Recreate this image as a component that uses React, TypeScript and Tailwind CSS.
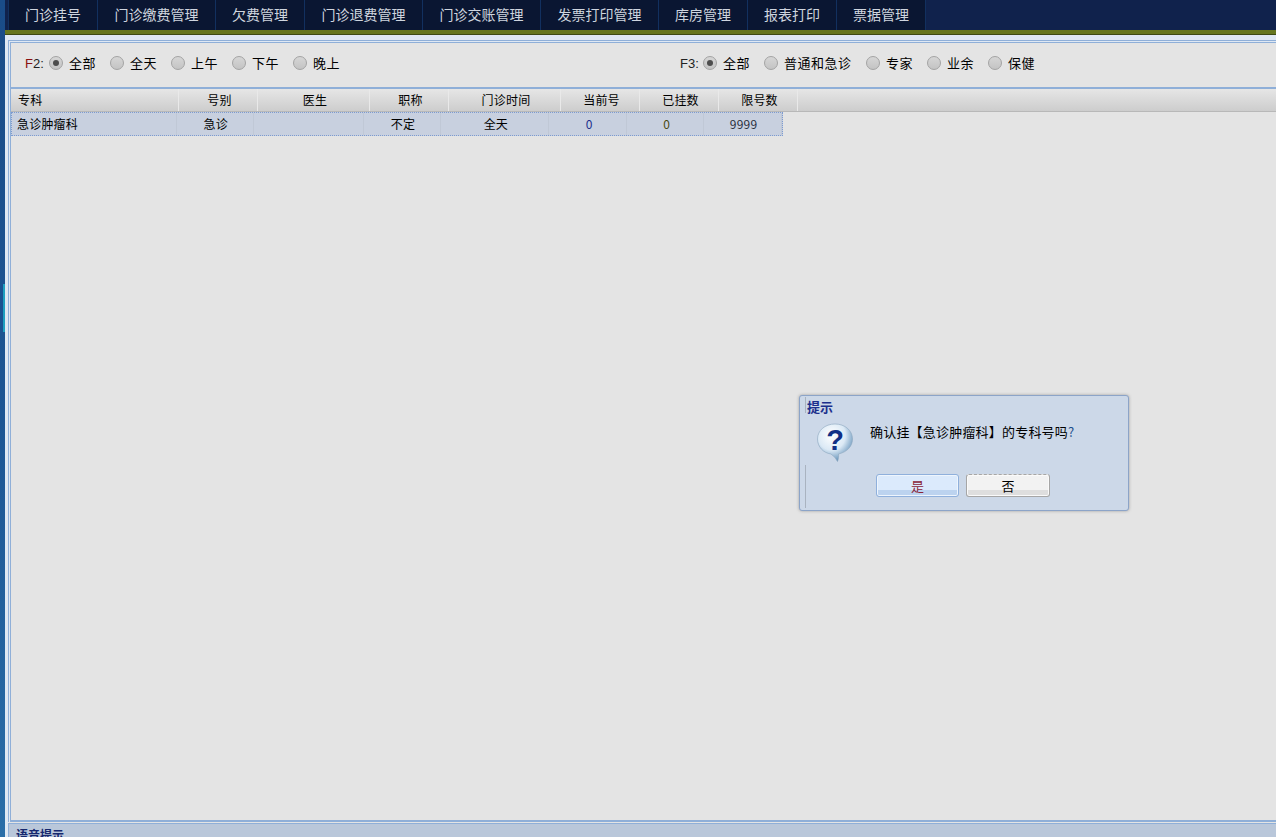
const tabs = [
  { label: '门诊挂号', w: 'w-[89px]' },
  { label: '门诊缴费管理', w: 'w-[118px]' },
  { label: '欠费管理', w: 'w-[89px]' },
  { label: '门诊退费管理', w: 'w-[118px]' },
  { label: '门诊交账管理', w: 'w-[118px]' },
  { label: '发票打印管理', w: 'w-[118px]' },
  { label: '库房管理', w: 'w-[89px]' },
  { label: '报表打印', w: 'w-[89px]' },
  { label: '票据管理', w: 'w-[89px]' },
];

const headers = [
  { label: '专科', w: 'w-[168px]', align: 'pl-[7px] text-left' },
  { label: '号别', w: 'w-[79px]', align: 'pl-[3px] text-center' },
  { label: '医生', w: 'w-[112px]', align: 'pl-[3px] text-center' },
  { label: '职称', w: 'w-[79px]', align: 'pl-[3px] text-center' },
  { label: '门诊时间', w: 'w-[112px]', align: 'pl-[3px] text-center' },
  { label: '当前号', w: 'w-[79px]', align: 'pl-[3px] text-center' },
  { label: '已挂数', w: 'w-[79px]', align: 'pl-[3px] text-center' },
  { label: '限号数', w: 'w-[79px]', align: 'pl-[3px] text-center' },
];

const cells = [
  { label: '急诊肿瘤科', w: 'w-[165px]', cls: 'pl-[5px] text-left text-black' },
  { label: '急诊', w: 'w-[77px]', cls: 'pl-[2px] text-center text-black' },
  { label: '', w: 'w-[110px]', cls: 'text-center' },
  { label: '不定', w: 'w-[78px]', cls: 'pl-[2px] text-center text-black' },
  { label: '全天', w: 'w-[108px]', cls: 'pl-[2px] text-center text-black' },
  { label: '0', w: 'w-[78px]', cls: 'pl-[3px] text-center text-[#1c2f8c]' },
  { label: '0', w: 'w-[77px]', cls: 'pl-[3px] text-center text-[#4a4a10]' },
  { label: '9999', w: 'w-[78px]', cls: 'pl-[2px] text-center text-[#2a3140]' },
];

function Radio({ label, checked = false, w }: { label: string; checked?: boolean; w: string }) {
  return (
    <div className={`flex items-center ${w}`}>
      <span className="flex h-[14px] w-[14px] shrink-0 items-center justify-center rounded-full border border-[#a3a3a3] bg-gradient-to-b from-[#d6d6d6] to-[#c4c4c4]">
        {checked && <span className="h-[6px] w-[6px] rounded-full bg-[#4d4d4d]" />}
      </span>
      <span className="ml-[6px] whitespace-nowrap pb-[2px] text-[13px] leading-none tracking-[0.5px] text-black">{label}</span>
    </div>
  );
}

function QuestionIcon() {
  return (
    <svg width="38" height="39" viewBox="0 0 38 39" className="shrink-0">
      <defs>
        <radialGradient id="bubble" cx="40%" cy="30%" r="72%">
          <stop offset="0%" stopColor="#ffffff" />
          <stop offset="55%" stopColor="#dbe9f5" />
          <stop offset="100%" stopColor="#5d8db6" />
        </radialGradient>
      </defs>
      <path
        d="M19 1C9 1 1.500 7.500 1.500 16c0 8 6 14 13.500 15l4 3.500 2.500 4c1-2.500 1.300-5 1-7.500C31 29 36.500 23.500 36.500 16 36.500 7.500 29 1 19 1z"
        fill="url(#bubble)"
        stroke="#8ba6bd"
        strokeWidth="0.6"
      />
      <text x="19" y="27" textAnchor="middle" fontFamily="'Liberation Sans', sans-serif" fontWeight="700" fontSize="29" fill="#0f2f86">
        ?
      </text>
    </svg>
  );
}

export default function App() {
  return (
    <div className="flex h-[837px] w-[1276px] overflow-hidden bg-[#e4e4e4] font-['Noto_Sans_CJK_SC','Liberation_Sans',sans-serif]">
      {/* left rail */}
      <div className="flex h-full w-[5px] shrink-0 flex-col bg-gradient-to-b from-[#1a4c88] via-[#1c5594] to-[#2a6ea8]">
        <div className="ml-[3px] mt-[284px] h-[48px] w-[2px] bg-[#1e9fc0]" />
      </div>

      <div className="flex min-w-0 flex-1 flex-col">
        {/* top tabs */}
        <div className="flex h-[30px] shrink-0 bg-[#10224c] pl-[3px]">
          {tabs.map((t) => (
            <div key={t.label} className={`flex h-full ${t.w} items-center justify-center border-l border-[#12305f] bg-[#0a1632] pb-[2px] text-[14px] leading-none text-[#cfd5df]`}>
              {t.label}
            </div>
          ))}
          <div className="h-full w-px bg-[#12305f]" />
        </div>
        <div className="h-[4px] shrink-0 bg-[#66761f]" />
        <div className="h-px shrink-0 bg-[#3e4a14]" />

        {/* main panel */}
        <div className="flex min-h-0 flex-1 flex-col bg-[#dfe8f3] pl-[3px] pt-[5px]">
          <div className="flex min-h-0 flex-1 flex-col border-l border-t border-[#8fafd8] pl-px pt-px">
            <div className="flex min-h-0 flex-1 flex-col border-l border-t border-[#8fafd8] bg-[#e4e4e4]">
              <div className="flex h-[44px] shrink-0 items-center pb-[4px] pl-[14px]">
                <span className="w-[24px] font-['Liberation_Sans',sans-serif] text-[13px] leading-none text-[#222]">
                  <span className="text-[#8a1010]">F</span>2:
                </span>
                <Radio label="全部" checked w="w-[61px]" />
                <Radio label="全天" w="w-[61px]" />
                <Radio label="上午" w="w-[61px]" />
                <Radio label="下午" w="w-[61px]" />
                <Radio label="晚上" w="w-[387px]" />
                <span className="w-[23px] font-['Liberation_Sans',sans-serif] text-[13px] leading-none text-[#222]">F3:</span>
                <Radio label="全部" checked w="w-[61px]" />
                <Radio label="普通和急诊" w="w-[102px]" />
                <Radio label="专家" w="w-[61px]" />
                <Radio label="业余" w="w-[61px]" />
                <Radio label="保健" w="w-[61px]" />
              </div>
              <div className="h-[2px] shrink-0 bg-[#8fafd8]" />
              <div className="flex h-[22px] shrink-0 bg-gradient-to-b from-[#e6e6e6] to-[#cdcdcd]">
                {headers.map((h) => (
                  <div key={h.label} className={`h-full ${h.w} border-r border-[#e9e9e9] text-[12px] leading-[22px] tracking-[0.2px] text-black ${h.align}`}>
                    {h.label}
                  </div>
                ))}
              </div>
              <div className="h-px shrink-0 bg-[#b8b8b8]" />
              <div className="flex h-[24px] w-[772px] shrink-0 border border-dotted border-[#7d9bd0] bg-[#c8d0df]">
                {cells.map((c, i) => (
                  <div key={i} className={`h-full ${c.w} border-r border-[#c0c8d6] text-[12px] leading-[22px] tracking-[0.2px] ${c.cls}`}>
                    {c.label}
                  </div>
                ))}
              </div>
              <div className="flex-1" />
              <div className="h-[2px] shrink-0 bg-[#8fafd8]" />
            </div>
          </div>

          {/* status bar */}
          <div className="h-px shrink-0 bg-[#e4e4e4]" />
          <div className="h-[14px] shrink-0 overflow-hidden border-l border-t border-[#8fafd8] bg-[#b9c7da] pl-[7px] pt-[4px] text-[12px] font-bold leading-[14px] text-[#16286e]">
            语音提示
          </div>
        </div>
      </div>

      {/* confirm dialog */}
      <div className="absolute left-[799px] top-[395px] flex h-[116px] w-[330px] flex-col rounded-[3px] border border-[#8ca4c8] bg-[#ccd8e8] shadow-[0_0_3px_rgba(90,90,90,0.5)]">
        <div className="absolute left-[5px] top-[1px] h-[16px] w-px bg-[#a9b3c0]" />
        <div className="absolute bottom-[2px] left-[5px] h-[43px] w-px bg-[#a9b3c0]" />
        <div className="pl-[7px] pt-[2px] text-[13px] font-bold leading-[17px] text-[#1c2f8c]">提示</div>
        <div className="flex pl-[16px] pt-[8px]">
          <QuestionIcon />
          <div className="ml-[16px] whitespace-nowrap text-[13px] leading-[17px] tracking-[0.2px] text-black">
            确认挂【急诊肿瘤科】的专科号吗<span className="text-[#1c4f8c]">?</span>
          </div>
        </div>
        <div className="mt-[12px] flex gap-[7px] pl-[76px]">
          <button className="h-[23px] w-[83px] rounded-[3px] border border-[#8fb0dc] bg-gradient-to-b from-[#dbeafc] from-70% to-[#bcd3ef] to-70% text-[13px] leading-none text-[#8a2438] shadow-[inset_0_0_0_1px_#eef5fd]">
            是
          </button>
          <button className="h-[23px] w-[84px] rounded-[3px] border border-[#a6a6a6] bg-gradient-to-b from-[#f2f2f2] from-70% to-[#dedede] to-70% text-[13px] leading-none text-black shadow-[inset_0_0_0_1px_#fafafa] [border-top-style:dashed]">
            否
          </button>
        </div>
      </div>
    </div>
  );
}
